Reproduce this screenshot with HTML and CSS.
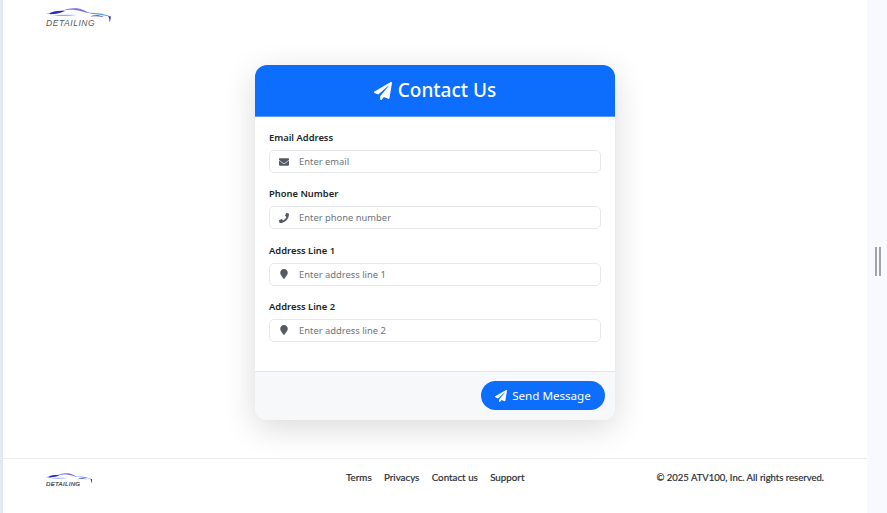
FILE: index.html
```html
<!DOCTYPE html>
<html lang="en">
<head>
<meta charset="utf-8">
<title>Contact Us</title>
<link rel="stylesheet" href="styles.css">
</head>
<body>
<svg class="defs" width="0" height="0" aria-hidden="true">
  <defs>
    <symbol id="plane" viewBox="0 0 512 512"><path d="M476 3.2L12.5 270.6c-18.1 10.4-15.8 35.6 2.2 43.2L121 358.4l287.3-253.2c5.500-4.900 13.300 2.600 8.600 8.300L176 407v80.500c0 23.600 28.500 32.900 42.500 15.800L282 426l124.600 52.200c14.200 6 30.400-2.900 33-18.200l72-432C515 7.800 493.300-6.800 476 3.200z"/></symbol>
    <symbol id="envelope" viewBox="0 0 512 512"><path d="M502.3 190.8c3.9-3.1 9.7-.2 9.7 4.7V400c0 26.5-21.5 48-48 48H48c-26.5 0-48-21.5-48-48V195.6c0-5 5.7-7.8 9.7-4.7 22.4 17.4 52.1 39.5 154.1 113.6 21.1 15.4 56.7 47.8 92.2 47.6 35.7.3 72-32.8 92.3-47.6 102-74.1 131.6-96.3 154-113.7zM256 320c23.2.4 56.6-29.2 73.4-41.4 132.7-96.3 142.8-104.7 173.4-128.7 5.8-4.5 9.2-11.5 9.2-18.9v-19c0-26.5-21.5-48-48-48H48C21.5 64 0 85.5 0 112v19c0 7.4 3.4 14.3 9.2 18.9 30.6 23.9 40.7 32.4 173.4 128.7 16.8 12.2 50.2 41.8 73.4 41.4z"/></symbol>
    <symbol id="phone" viewBox="0 0 512 512"><path d="M493.4 24.6l-104-24c-11.3-2.6-22.9 3.3-27.5 13.9l-48 112c-4.2 9.8-1.4 21.3 6.9 28l60.6 49.6c-36 76.7-98.9 140.5-177.2 177.2l-49.6-60.6c-6.8-8.3-18.2-11.1-28-6.9l-112 48C3.9 366.5-2 378.1.6 389.4l24 104C27.1 504.2 36.7 512 48 512c256.1 0 464-207.5 464-464 0-11.2-7.7-20.9-18.6-23.4z"/></symbol>
    <symbol id="pin" viewBox="0 0 384 512"><path d="M172.268 501.67C26.97 291.031 0 269.413 0 192 0 85.961 85.961 0 192 0s192 85.961 192 192c0 77.413-26.97 99.031-172.268 309.67-9.535 13.774-29.93 13.773-39.464 0z"/></symbol>
    <symbol id="car" viewBox="0 0 66 18">
      <path d="M0 6C5 4.500 11 3.800 17 3.500 12 5.500 6 6.300 0 6z" fill="#5f8fe8"/>
      <path d="M4 5C8 3 13 2.500 19 3 15 5 10 6 4 6.200z" fill="#2a2cc4"/>
      <path d="M6 7.300C14 6.500 22 6.500 31 7 23 8 14 8.300 6 7.300z" fill="#8fa6ee"/>
      <path d="M15 3C20 1 25 -.2 31 .3 36 1 40 3.500 44 5 38 4.600 34 2.500 29 2 24 1.600 20 2.200 15 3z" fill="#7f6fe0"/>
      <path d="M40 4.600C47 5 57 5.200 64.500 8.500 56 7 48 6.500 40 4.600z" fill="#4a9bf0"/>
      <path d="M44 8.500C48 6.800 53 6.800 58 8.800 53 8 49 8 44 8.500z" fill="#3a3fc4"/>
      <path d="M62 8 64.800 8.600 64.400 12 63.400 14.500C63.600 12 63.500 10 62 8z" fill="#2c2cb0"/>
    </symbol>
  </defs>
</svg>
<div class="rail-left"></div>
<div class="page">
  <header class="topbar">
    <div class="logo">
      <svg class="logo-car"><use href="#car"/></svg>
      <span class="logo-text">DETAILING</span>
    </div>
  </header>
  <main class="content">
    <section class="card">
      <h1 class="card-head"><svg class="icon-title"><use href="#plane"/></svg>Contact Us</h1>
      <form class="card-body">
        <div class="field">
          <label class="field-label">Email Address</label>
          <div class="input-box"><span class="input-icon"><svg class="ico"><use href="#envelope"/></svg></span><span class="placeholder">Enter email</span></div>
        </div>
        <div class="field">
          <label class="field-label">Phone Number</label>
          <div class="input-box"><span class="input-icon"><svg class="ico"><use href="#phone"/></svg></span><span class="placeholder">Enter phone number</span></div>
        </div>
        <div class="field">
          <label class="field-label">Address Line 1</label>
          <div class="input-box"><span class="input-icon"><svg class="ico"><use href="#pin"/></svg></span><span class="placeholder">Enter address line 1</span></div>
        </div>
        <div class="field">
          <label class="field-label">Address Line 2</label>
          <div class="input-box"><span class="input-icon"><svg class="ico"><use href="#pin"/></svg></span><span class="placeholder">Enter address line 2</span></div>
        </div>
      </form>
      <div class="card-foot">
        <button class="send" type="button"><svg class="icon-send"><use href="#plane"/></svg>Send Message</button>
      </div>
    </section>
  </main>
  <footer class="footer">
    <div class="logo logo-small">
      <svg class="logo-car"><use href="#car"/></svg>
      <span class="logo-text">DETAILING</span>
    </div>
    <nav class="foot-links">
      <a>Terms</a><a>Privacys</a><a>Contact us</a><a>Support</a>
    </nav>
    <p class="copy">© 2025 ATV100, Inc. All rights reserved.</p>
  </footer>
</div>
<div class="rail-right"><span class="handle"></span><span class="handle"></span></div>
</body>
</html>
```

FILE: styles.css
```css
* { box-sizing: border-box; }
html, body { height: 100%; }
body {
  margin: 0;
  display: flex;
  height: 513px;
  overflow: hidden;
  background: #fff;
  font-family: "Noto Sans", sans-serif;
  color: #212529;
}
.defs { position: absolute; }
.rail-left { width: 3px; flex: none; background: #e4e8f5; }
.rail-right {
  width: 20px;
  flex: none;
  background: #f7f9ff;
  display: flex;
  justify-content: center;
  align-items: center;
  gap: 2px;
  padding-left: 2px;
  padding-top: 10px;
}
.handle { width: 2px; height: 29px; background: #a3a3a3; }
.page { flex: 1; min-width: 0; display: flex; flex-direction: column; }
.topbar { height: 65px; padding: 8px 0 0 43px; flex: none; }
.logo { position: relative; width: 66px; height: 19px; display: flex; flex-direction: column; }
.logo-car { width: 66px; height: 18px; display: block; }
.logo-text {
  position: absolute;
  left: 0;
  top: 10px;
  font: italic 8.5px/10px "Liberation Sans", sans-serif;
  letter-spacing: 0.55px;
  color: #555;
}
.logo-small { width: 47px; height: 14px; margin-top: 2px; }
.logo-small .logo-car { width: 47px; height: 13px; }
.logo-small .logo-text { top: 7px; font-size: 6px; line-height: 8px; letter-spacing: 0.35px; }
.content { flex: none; height: 355px; display: flex; justify-content: center; }
.card {
  width: 360px;
  display: flex;
  flex-direction: column;
  border-radius: 12px;
  overflow: hidden;
  background: #fff;
  box-shadow: 0 8px 32px rgba(0, 0, 0, 0.15);
}
.card-head {
  margin: 0;
  height: 52px;
  flex: none;
  display: flex;
  align-items: center;
  justify-content: center;
  gap: 6px;
  padding-bottom: 2px;
  background: #0d6efd;
  border-bottom: 1px solid #5a9bfd;
  color: #fff;
  font-size: 19px;
  font-weight: 500;
}
.icon-title { width: 18px; height: 18px; fill: #fff; margin-top: 3px; }
.card-body { flex: 1; padding: 14px 14px 0; display: flex; flex-direction: column; gap: 14.3px; }
.field { display: flex; flex-direction: column; gap: 5px; }
.field-label { font-size: 9.4px; line-height: 14px; font-weight: 600; color: #212529; height: 14px; }
.input-box {
  height: 23px;
  display: flex;
  align-items: center;
  border: 1px solid #e6e8ec;
  border-radius: 5px;
  background: #fff;
}
.input-icon { width: 28px; flex: none; display: flex; justify-content: center; }
.ico { width: 10px; height: 10px; fill: #555b61; display: block; }
.placeholder { font-size: 9.4px; margin-left: 1px; color: #6c757d; }
.card-foot {
  height: 49px;
  flex: none;
  display: flex;
  justify-content: flex-end;
  align-items: center;
  padding: 0 10px 2px 0;
  background: #f7f8fa;
  border-top: 1px solid #e4e6ea;
}
.send {
  height: 29px;
  width: 124px;
  padding: 0;
  border: 0;
  border-radius: 15px;
  background: #0d6efd;
  color: #fff;
  font: 400 11.6px "Noto Sans", sans-serif;
  display: flex;
  align-items: center;
  justify-content: center;
  gap: 5px;
}
.icon-send { width: 12px; height: 12px; fill: #fff; margin-top: 1px; }
.footer {
  flex: 1;
  margin-top: 38px;
  border-top: 1px solid #e9ebef;
  display: flex;
  align-items: flex-start;
  padding: 12px 43px 0 43px;
  font-family: Lato, sans-serif;
  font-size: 9.8px;
  color: #2b2f33;
  -webkit-text-stroke: 0.2px #2b2f33;
}
.foot-links { display: flex; gap: 12.3px; margin-left: 253px; line-height: 13px; }
.copy { margin: 0 0 0 auto; line-height: 13px; font-size: 9.5px; }
```
